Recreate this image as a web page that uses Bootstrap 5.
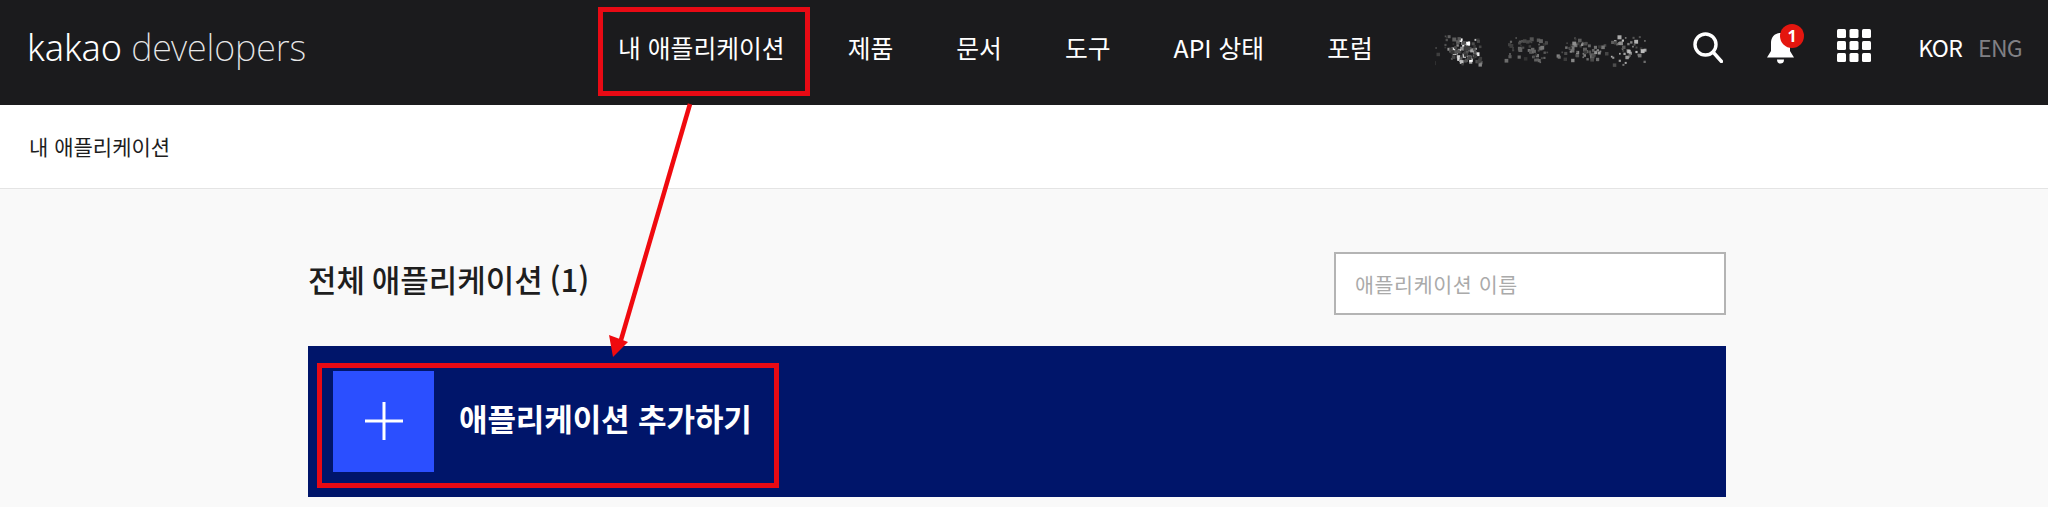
<!DOCTYPE html>
<html lang="ko">
<head>
  <meta charset="UTF-8" />
  <meta name="viewport" content="width=device-width, initial-scale=1" />
  <title>내 애플리케이션 | kakao developers</title>

  <link href="https://cdn.jsdelivr.net/npm/bootstrap@5.3.0/dist/css/bootstrap.min.css" rel="stylesheet" />

  <style>
    html, body {
      height: 507px;
      overflow: hidden;
    }
    body {
      font-family: "Noto Sans CJK KR", "Noto Sans", sans-serif;
      background-color: #f9f9f9;
      color: #1e1e1e;
      position: relative;
    }
    .top-bar {
      height: 105px;
      background-color: #1b1b1d;
      padding: 0 26px 10px 27px;
    }
    .brand-logo {
      font-family: "Noto Sans", sans-serif;
      font-size: 36px;
      font-weight: 300;
      color: #fff;
      width: 278px;
      white-space: nowrap;
      line-height: 1;
      letter-spacing: -0.1px;
    }
    .brand-logo .brand-dev {
      font-weight: 200;
      color: #e8e8e8;
    }
    .top-menu {
      margin-left: 313px;
      gap: 63px;
      font-size: 24.8px;
      color: #fff;
      white-space: nowrap;
    }
    .blur-name {
      margin-left: 62px;
      width: 218px;
      height: 70px;
    }
    .top-icons {
      margin-left: auto;
    }
    .bell-icon {
      margin-left: 44px;
      margin-bottom: 8px;
    }
    .apps-icon {
      margin-left: 32px;
      margin-bottom: 5px;
    }
    .lang-switch {
      font-size: 23px;
      letter-spacing: -0.7px;
      gap: 16px;
      margin-left: 47px;
    }
    .lang-off {
      color: #808084;
    }
    .sub-bar {
      height: 84px;
      background-color: #fff;
      border-bottom: 1px solid #e4e4e4;
      padding-left: 29px;
      font-size: 21px;
    }
    .page-body {
      width: 1418px;
      margin-left: 308px;
    }
    .title-row {
      height: 157px;
      padding-top: 32px;
    }
    .page-title {
      font-size: 31px;
      font-weight: 500;
      word-spacing: -2px;
      margin: 0 0 9px 0;
    }
    .app-search {
      width: 392px;
      height: 63px;
      border: 2px solid #b4b4b4;
      border-radius: 0;
      background-color: #fff;
      font-size: 20.6px;
      letter-spacing: 0.6px;
      padding: 0 19px;
    }
    .app-search::placeholder {
      color: #aaa;
    }
    .add-panel {
      height: 151px;
      background-color: #00156a;
      padding-left: 25px;
      color: #fff;
    }
    .add-square {
      width: 101px;
      height: 101px;
      background-color: #2b4fff;
      margin-top: -1px;
    }
    .add-label {
      font-size: 31px;
      font-weight: 700;
      letter-spacing: -0.1px;
      margin: 0 0 6px 25px;
      white-space: nowrap;
    }
    .notes-layer {
      position: absolute;
      left: 0;
      top: 0;
      pointer-events: none;
    }
  </style>
</head>
<body>

  <!-- Header -->
  <header class="top-bar d-flex align-items-center">
    <div class="brand-logo">kakao <span class="brand-dev">developers</span></div>
    <div class="top-menu d-flex align-items-center">
      <span>내 애플리케이션</span>
      <span>제품</span>
      <span>문서</span>
      <span>도구</span>
      <span>API 상태</span>
      <span>포럼</span>
    </div>
    <svg class="blur-name" id="blur-name" viewBox="0 0 218 70"></svg>
    <div class="top-icons d-flex align-items-center">
      <svg width="30" height="31" viewBox="0 0 30 31" fill="none" stroke="#fff" stroke-width="3.4">
        <circle cx="12.5" cy="12.5" r="10.5" />
        <path d="M20 20l8.5 9.5" stroke-linecap="round" />
      </svg>
      <svg class="bell-icon" width="38" height="40" viewBox="0 0 38 40">
        <path d="M13.500 9c-6 0-9.500 4.500-9.500 10v8l-4 6.500h27l-4-6.500v-8c0-5.500-3.500-10-9.500-10z" fill="#fff" />
        <path d="M10 35.500h7c0 3-1.500 4-3.500 4s-3.500-1-3.500-4z" fill="#fff" />
        <circle cx="25" cy="12" r="12" fill="#e4160f" />
        <text x="25" y="17.800" text-anchor="middle" fill="#fff" font-size="16" font-weight="700" font-family="Noto Sans, sans-serif">1</text>
      </svg>
      <svg class="apps-icon" width="34" height="33" viewBox="0 0 34 33" fill="#fff">
        <rect x="0" y="0" width="9" height="9" rx="1.500" /><rect x="12.500" y="0" width="9" height="9" rx="1.500" /><rect x="25" y="0" width="9" height="9" rx="1.500" />
        <rect x="0" y="12" width="9" height="9" rx="1.500" /><rect x="12.500" y="12" width="9" height="9" rx="1.500" /><rect x="25" y="12" width="9" height="9" rx="1.500" />
        <rect x="0" y="24" width="9" height="9" rx="1.500" /><rect x="12.500" y="24" width="9" height="9" rx="1.500" /><rect x="25" y="24" width="9" height="9" rx="1.500" />
      </svg>
      <div class="lang-switch d-flex">
        <span class="text-white">KOR</span>
        <span class="lang-off">ENG</span>
      </div>
    </div>
  </header>

  <!-- Breadcrumb bar -->
  <div class="sub-bar d-flex align-items-center">내 애플리케이션</div>

  <!-- Content -->
  <main class="page-body">
    <div class="title-row d-flex justify-content-between align-items-center">
      <h1 class="page-title">전체 애플리케이션 (1)</h1>
      <input class="form-control app-search" type="text" placeholder="애플리케이션 이름" />
    </div>
    <div class="add-panel d-flex align-items-center">
      <div class="add-square d-flex align-items-center justify-content-center">
        <svg width="38" height="38" viewBox="0 0 38 38" stroke="#fff" stroke-width="3">
          <path d="M19 0v38M0 19h38" />
        </svg>
      </div>
      <div class="add-label">애플리케이션 추가하기</div>
    </div>
  </main>

  <!-- Red annotations drawn over the screenshot -->
  <svg class="notes-layer" width="2048" height="507" viewBox="0 0 2048 507" fill="none">
    <rect x="600.500" y="9.500" width="207" height="84" stroke="#e80a14" stroke-width="5" />
    <rect x="319.500" y="365.500" width="457" height="120" stroke="#e80a14" stroke-width="5" />
    <path d="M690 104L621 340" stroke="#f00a0f" stroke-width="4.500" />
    <path d="M613 357L609 335L628 342z" fill="#f00a0f" />
  </svg>

  <script src="https://cdn.jsdelivr.net/npm/bootstrap@5.3.0/dist/js/bootstrap.bundle.min.js"></script>

  <script>
    // speckle for the scribbled-out account name
    const clusters = [
      { x: 28, spread: 13, n: 55, light: 1 },
      { x: 20, spread: 22, n: 45, light: 0.25 },
      { x: 94, spread: 16, n: 50, light: 0.35 },
      { x: 136, spread: 11, n: 32, light: 0.5 },
      { x: 156, spread: 11, n: 30, light: 0.5 },
      { x: 192, spread: 13, n: 44, light: 0.7 }
    ];
    const blurName = document.getElementById('blur-name');
    let seed = 7;
    const rnd = () => {
      seed = (seed * 16807) % 2147483647;
      return seed / 2147483647;
    };
    let dots = '';
    clusters.forEach((c) => {
      for (let i = 0; i < c.n; i++) {
        const x = c.x + (rnd() + rnd() - 1) * c.spread * 1.6;
        const y = 36 + (rnd() + rnd() - 1) * 15;
        const size = 1.5 + rnd() * 2.5;
        const grey = Math.round(50 + rnd() * 205 * c.light);
        dots += `<rect x="${x.toFixed(1)}" y="${y.toFixed(1)}" width="${size.toFixed(1)}" height="${size.toFixed(1)}" fill="rgb(${grey},${grey},${grey})"/>`;
      }
    });
    blurName.innerHTML = dots;
  </script>
</body>
</html>
